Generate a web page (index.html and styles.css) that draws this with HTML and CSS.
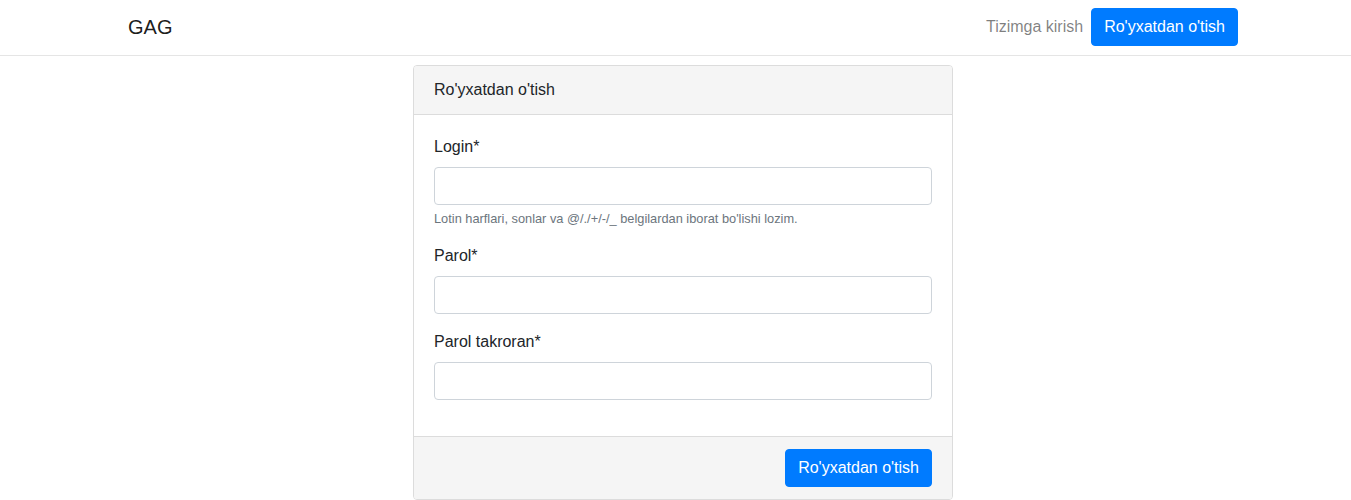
FILE: index.html
```html
<!DOCTYPE html>
<html lang="uz">
<head>
<meta charset="utf-8">
<title>Ro'yxatdan o'tish</title>
<link rel="stylesheet" href="styles.css">
</head>
<body>
<nav class="navbar">
  <div class="container nav-inner">
    <a class="brand" href="#">GAG</a>
    <div class="nav-right">
      <a class="nav-link" href="#">Tizimga kirish</a>
      <a class="btn btn-primary" href="#">Ro'yxatdan o'tish</a>
    </div>
  </div>
</nav>
<main class="container">
  <div class="card">
    <div class="card-header">Ro'yxatdan o'tish</div>
    <form class="card-body-form">
      <div class="card-body">
        <div class="form-group">
          <label class="label" for="login">Login*</label>
          <input class="form-control" id="login" type="text">
          <small class="form-text">Lotin harflari, sonlar va @/./+/-/_ belgilardan iborat bo'lishi lozim.</small>
        </div>
        <div class="form-group">
          <label class="label" for="parol">Parol*</label>
          <input class="form-control" id="parol" type="password">
        </div>
        <div class="form-group">
          <label class="label" for="parol2">Parol takroran*</label>
          <input class="form-control" id="parol2" type="password">
        </div>
      </div>
      <div class="card-footer">
        <button class="btn btn-primary" type="submit">Ro'yxatdan o'tish</button>
      </div>
    </form>
  </div>
</main>
</body>
</html>
```
FILE: styles.css
```css
* { box-sizing: border-box; }
html, body { margin: 0; padding: 0; }
body {
  font-family: "Liberation Sans", Arial, sans-serif;
  font-size: 16px;
  line-height: 1.5;
  color: #212529;
  background: #fff;
}
a { text-decoration: none; }

.container {
  width: 1140px;
  margin-left: calc(50% - 562.5px);
  padding: 0 15px;
}

.navbar {
  border-bottom: 1px solid #e5e5e5;
  padding: 8px 0 9px;
}
.nav-inner {
  display: flex;
  align-items: center;
  justify-content: space-between;
  height: 38px;
}
.brand {
  font-size: 20px;
  line-height: 30px;
  color: rgba(0, 0, 0, 0.9);
}
.nav-right {
  display: flex;
  align-items: center;
}
.nav-link {
  color: rgba(0, 0, 0, 0.5);
  padding: 8px;
  line-height: 24px;
}

.btn {
  display: inline-block;
  font-family: inherit;
  font-size: 16px;
  line-height: 24px;
  padding: 6px 12px;
  border: 1px solid transparent;
  border-radius: 4px;
  cursor: pointer;
}
.btn-primary {
  color: #fff;
  background: #007bff;
  border-color: #007bff;
}

.card {
  width: 540px;
  margin: 9px auto 0;
  border: 1px solid #dcdcdc;
  border-radius: 4px;
  background: #fff;
  overflow: hidden;
}
.card-header {
  background: #f5f5f5;
  padding: 12px 20px;
  border-bottom: 1px solid #dcdcdc;
}
.card-body-form { margin: 0; }
.card-body { padding: 20px; }
.form-group { margin-bottom: 16px; }
.label {
  display: block;
  margin-bottom: 8px;
}
.form-control {
  display: block;
  width: 100%;
  height: 38px;
  padding: 6px 12px;
  font-family: inherit;
  font-size: 16px;
  color: #495057;
  background: #fff;
  border: 1px solid #ced4da;
  border-radius: 4px;
}
.form-text {
  display: block;
  margin-top: 4px;
  font-size: 12.8px;
  line-height: 19.2px;
  color: #6c757d;
}
.card-footer {
  background: #f5f5f5;
  border-top: 1px solid #dcdcdc;
  padding: 12px 20px;
  display: flex;
  justify-content: flex-end;
}
```
